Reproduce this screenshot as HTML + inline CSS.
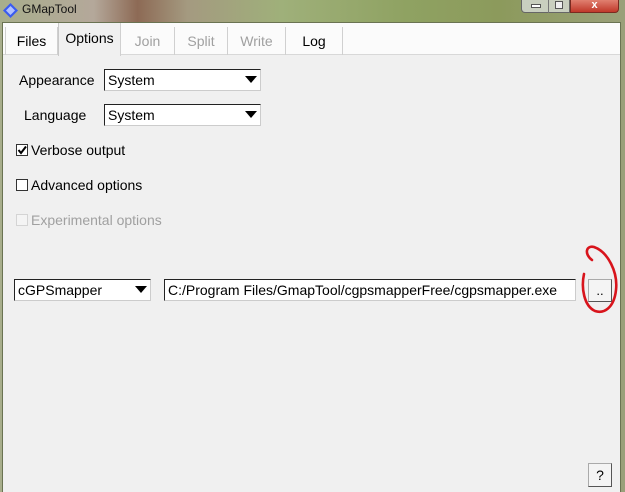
<!DOCTYPE html>
<html><head><meta charset="utf-8"><style>
*{margin:0;padding:0;box-sizing:border-box}
body{width:625px;height:492px;overflow:hidden;position:relative;font-family:"Liberation Sans",Arial,sans-serif;font-size:14px;color:#000;
background:linear-gradient(90deg,#a8ae8c 0%,#b4a89a 15%,#8d6a55 22%,#a49a80 30%,#9fb07a 45%,#8fa262 65%,#8c9a5c 80%,#9aa07a 100%)}
.abs{position:absolute}
.title{left:22px;top:2px;font-size:12px;color:#111}
.win{left:2px;top:22px;width:619px;height:470px;background:#f0f0f0;border:1px solid #6a7352;border-bottom:none}
.tabbar{left:3px;top:23px;width:617px;height:32px;background:#fbfbfb;border-bottom:1px solid #d8d8d8}
.tab{top:25px;height:30px;font-size:14px;text-align:center;line-height:30px;border-right:1px solid #d0d0d0}
.dis{color:#a0a0a0}
.combo{height:22px;background:#fff;border:1px solid #222;border-right-color:#ccc;border-bottom-color:#ccc;font-size:14px;line-height:20px;padding-left:3px}
.arr{position:absolute;right:3px;top:6px;width:0;height:0;border-left:6px solid transparent;border-right:6px solid transparent;border-top:7px solid #000}
.cb{width:12px;height:12px;border:1px solid #333;background:#fff}
.btn{background:#f4f4f4;border:1px solid #aaa;border-right-color:#555;border-bottom-color:#555;text-align:center;font-size:13px}
</style></head><body>
<svg class="abs" style="left:3px;top:3px" width="15" height="15"><polygon points="7.5,0 15,7.5 7.5,15 0,7.5" fill="#3a5cf0"/><polygon points="7.5,3 12,7.5 7.5,12 3,7.5" fill="#b0c0ff"/></svg>
<div class="abs title">GMapTool</div>
<div class="abs" style="left:521px;top:0;width:49px;height:13px;background:#c9cfbf;border:1px solid #666;border-top:none;border-radius:0 0 0 4px"></div>
<div class="abs" style="left:548px;top:0;width:1px;height:13px;background:#777"></div>
<div class="abs" style="left:531px;top:4px;width:10px;height:4px;background:#fff;border:1px solid #555"></div>
<div class="abs" style="left:555px;top:1px;width:8px;height:8px;border:1px solid #555;background:#eee"></div>
<div class="abs" style="left:570px;top:0;width:49px;height:13px;background:linear-gradient(#e08070,#c0382a);border:1px solid #7a2a20;border-top:none;border-radius:0 0 4px 0;color:#fff;font-size:11px;text-align:center;font-weight:bold;line-height:10px">x</div>
<div class="abs win"></div>
<div class="abs tabbar"></div>
<div class="abs tab" style="left:5px;width:53px;border-left:1px solid #d0d0d0;top:27px;height:28px;line-height:28px">Files</div>
<div class="abs tab" style="left:58px;width:63px;background:#f0f0f0;top:23px;height:33px;border-left:1px solid #c8c8c8;line-height:31px">Options</div>
<div class="abs tab dis" style="left:121px;width:54px;top:27px;height:28px;line-height:28px">Join</div>
<div class="abs tab dis" style="left:175px;width:53px;top:27px;height:28px;line-height:28px">Split</div>
<div class="abs tab dis" style="left:228px;width:58px;top:27px;height:28px;line-height:28px">Write</div>
<div class="abs tab" style="left:286px;width:57px;top:27px;height:28px;line-height:28px">Log</div>

<div class="abs" style="left:19px;top:72px">Appearance</div>
<div class="abs combo" style="left:104px;top:69px;width:157px">System<div class="arr"></div></div>
<div class="abs" style="left:24px;top:107px">Language</div>
<div class="abs combo" style="left:104px;top:104px;width:157px">System<div class="arr"></div></div>

<div class="abs cb" style="left:16px;top:144px"></div>
<svg class="abs" style="left:16px;top:144px" width="12" height="12"><path d="M2.5,6 L5,9 L10,2.5" stroke="#000" stroke-width="2" fill="none"/></svg>
<div class="abs" style="left:31px;top:142px">Verbose output</div>
<div class="abs cb" style="left:16px;top:179px"></div>
<div class="abs" style="left:31px;top:177px">Advanced options</div>
<div class="abs cb" style="left:16px;top:214px;border-color:#d4d4d4;background:#f4f4f4"></div>
<div class="abs dis" style="left:31px;top:212px">Experimental options</div>

<div class="abs combo" style="left:14px;top:279px;width:137px">cGPSmapper<div class="arr"></div></div>
<div class="abs combo" style="left:164px;top:279px;width:412px">C:/Program Files/GmapTool/cgpsmapperFree/cgpsmapper.exe</div>
<div class="abs btn" style="left:588px;top:279px;width:24px;height:23px;line-height:21px">..</div>
<svg class="abs" style="left:578px;top:242px" width="47" height="75"><path d="M14,18 C6,12 8,3 16,5 C30,10 40,30 38,48 C36,66 26,72 17,69 C6,64 3,46 6,32" stroke="#d8141c" stroke-width="2.6" fill="none" stroke-linecap="round"/></svg>

<div class="abs btn" style="left:588px;top:463px;width:24px;height:24px;line-height:22px;font-size:14px">?</div>
</body></html>
